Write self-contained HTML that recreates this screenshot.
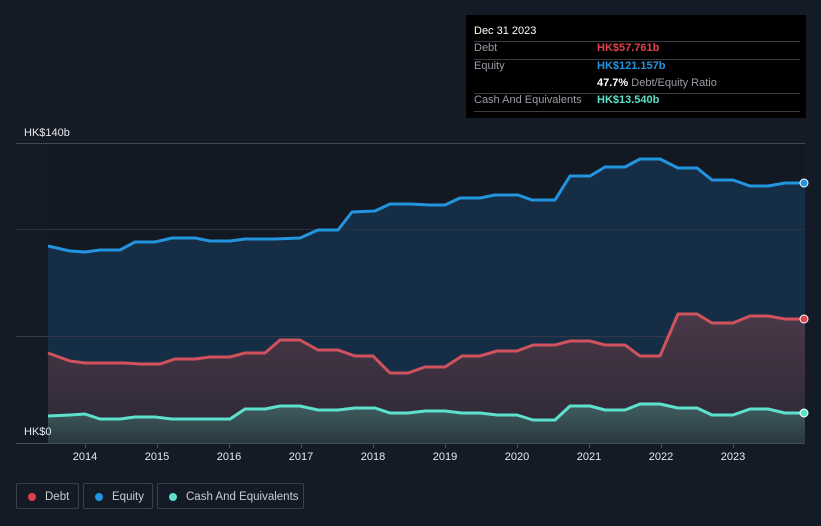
<!DOCTYPE html>
<html><head><style>
body{margin:0;background:#151b26;width:821px;height:526px;overflow:hidden;font-family:"Liberation Sans",sans-serif;position:relative}
.tt{position:absolute;left:466px;top:15px;width:340px;height:103px;background:#000;}
.tt div{position:absolute;font-size:11px;color:#9a9ea5}
.ln{position:absolute;left:8px;width:326px;height:1px;background:#3a3d42}
.lg{position:absolute;top:483px;height:26px;border:1px solid #3a3f4a;border-radius:2px;color:#c9ccd1;font-size:11.5px;line-height:26px;box-sizing:border-box}
.lg i{position:absolute;left:11px;top:9px;width:8px;height:8px;border-radius:50%}
</style></head><body>
<svg width="821" height="526" style="position:absolute;left:0;top:0">
<defs>
<linearGradient id="dg" x1="0" y1="0" x2="0" y2="1"><stop offset="0" stop-color="#4a3848"/><stop offset="1" stop-color="#2b2735"/></linearGradient>
<linearGradient id="cg" x1="0" y1="0" x2="0" y2="1"><stop offset="0" stop-color="#405e60"/><stop offset="1" stop-color="#2a3841"/></linearGradient>
</defs>
<rect x="48" y="143" width="757" height="300" fill="#131923"/>
<polygon fill="#152e46" points="48,246 70,251 85,252 100,250 120,250 135,242 155,242 172,238 195,238 210,241 230,241 245,239 275,239 300,238 318,230 338,230 352,212 375,211 390,204 410,204 430,205 445,205 460,198 480,198 495,195 518,195 532,200 555,200 570,176 590,176 605,167 625,167 640,159 660,159 678,168 697,168 712,180 733,180 750,186 768,186 785,183 805,183 805,443 48,443"/>
<line x1="16" y1="143.5" x2="805" y2="143.5" stroke="#44474f"/>
<line x1="16" y1="229.5" x2="805" y2="229.5" stroke="#2b3340"/>
<line x1="16" y1="336.5" x2="805" y2="336.5" stroke="#33394a"/>
<polygon fill="url(#dg)" points="48,353 70,361 85,363 125,363 140,364 160,364 175,359 195,359 210,357 230,357 245,353 265,353 280,340 300,340 318,350 338,350 355,356 373,356 390,373 408,373 425,367 445,367 462,356 480,356 497,351 517,351 533,345 555,345 570,341 590,341 605,345 625,345 640,356 660,356 678,314 697,314 712,323 733,323 750,316 768,316 785,319 805,319 805,443 48,443"/>
<polygon fill="url(#cg)" points="48,416 70,415 85,414 100,419 120,419 135,417 155,417 172,419 230,419 245,409 265,409 280,406 300,406 318,410 338,410 355,408 375,408 390,413 408,413 425,411 445,411 462,413 480,413 497,415 517,415 533,420 555,420 570,406 590,406 605,410 625,410 640,404 660,404 678,408 697,408 712,415 733,415 750,409 768,409 785,413 805,413 805,443 48,443"/>
<g fill="none" stroke-width="3" stroke-linejoin="round">
<polyline stroke="#2394df" points="48,246 70,251 85,252 100,250 120,250 135,242 155,242 172,238 195,238 210,241 230,241 245,239 275,239 300,238 318,230 338,230 352,212 375,211 390,204 410,204 430,205 445,205 460,198 480,198 495,195 518,195 532,200 555,200 570,176 590,176 605,167 625,167 640,159 660,159 678,168 697,168 712,180 733,180 750,186 768,186 785,183 805,183"/>
<polyline stroke="#d0525c" points="48,353 70,361 85,363 125,363 140,364 160,364 175,359 195,359 210,357 230,357 245,353 265,353 280,340 300,340 318,350 338,350 355,356 373,356 390,373 408,373 425,367 445,367 462,356 480,356 497,351 517,351 533,345 555,345 570,341 590,341 605,345 625,345 640,356 660,356 678,314 697,314 712,323 733,323 750,316 768,316 785,319 805,319"/>
<polyline stroke="#5de0cc" points="48,416 70,415 85,414 100,419 120,419 135,417 155,417 172,419 230,419 245,409 265,409 280,406 300,406 318,410 338,410 355,408 375,408 390,413 408,413 425,411 445,411 462,413 480,413 497,415 517,415 533,420 555,420 570,406 590,406 605,410 625,410 640,404 660,404 678,408 697,408 712,415 733,415 750,409 768,409 785,413 805,413"/>
</g>
<circle cx="804" cy="183" r="4" fill="#2394df" stroke="#fff" stroke-width="1"/>
<circle cx="804" cy="319" r="4" fill="#e0434b" stroke="#fff" stroke-width="1"/>
<circle cx="804" cy="413" r="4" fill="#5de0cc" stroke="#fff" stroke-width="1"/>
<line x1="16" y1="443.5" x2="805" y2="443.5" stroke="#4a4e57"/>
<g stroke="#4a4e57"><line x1="85.5" y1="443" x2="85.5" y2="448"/><line x1="157.5" y1="443" x2="157.5" y2="448"/><line x1="229.5" y1="443" x2="229.5" y2="448"/><line x1="301.5" y1="443" x2="301.5" y2="448"/><line x1="373.5" y1="443" x2="373.5" y2="448"/><line x1="445.5" y1="443" x2="445.5" y2="448"/><line x1="517.5" y1="443" x2="517.5" y2="448"/><line x1="589.5" y1="443" x2="589.5" y2="448"/><line x1="661.5" y1="443" x2="661.5" y2="448"/><line x1="733.5" y1="443" x2="733.5" y2="448"/></g>
<g fill="#e6e8eb" font-size="11" text-anchor="middle" font-family="Liberation Sans,sans-serif">
<text x="85" y="460">2014</text><text x="157" y="460">2015</text><text x="229" y="460">2016</text><text x="301" y="460">2017</text><text x="373" y="460">2018</text><text x="445" y="460">2019</text><text x="517" y="460">2020</text><text x="589" y="460">2021</text><text x="661" y="460">2022</text><text x="733" y="460">2023</text>
</g>
<text x="24" y="136" fill="#e6e8eb" font-size="11">HK$140b</text>
<text x="24" y="435" fill="#e6e8eb" font-size="11">HK$0</text>
</svg>
<div class="tt">
<div style="left:8px;top:10px;color:#fff">Dec 31 2023</div>
<div class="ln" style="top:26px"></div>
<div style="left:8px;top:27px">Debt</div><div style="left:131px;top:27px;color:#e0434b;font-weight:bold">HK$57.761b</div>
<div class="ln" style="top:44px"></div>
<div style="left:8px;top:45px">Equity</div><div style="left:131px;top:45px;color:#2394df;font-weight:bold">HK$121.157b</div>
<div style="left:131px;top:62px"><b style="color:#fff">47.7%</b> Debt/Equity Ratio</div>
<div class="ln" style="top:78px"></div>
<div style="left:8px;top:79px">Cash And Equivalents</div><div style="left:131px;top:79px;color:#5de0cc;font-weight:bold">HK$13.540b</div>
<div class="ln" style="top:96px"></div>
</div>
<div class="lg" style="left:16px;width:63px"><i style="background:#e0434b"></i><span style="position:absolute;left:28px">Debt</span></div>
<div class="lg" style="left:83px;width:70px"><i style="background:#2394df"></i><span style="position:absolute;left:28px">Equity</span></div>
<div class="lg" style="left:157px;width:147px"><i style="background:#5de0cc"></i><span style="position:absolute;left:28px">Cash And Equivalents</span></div>
</body></html>
